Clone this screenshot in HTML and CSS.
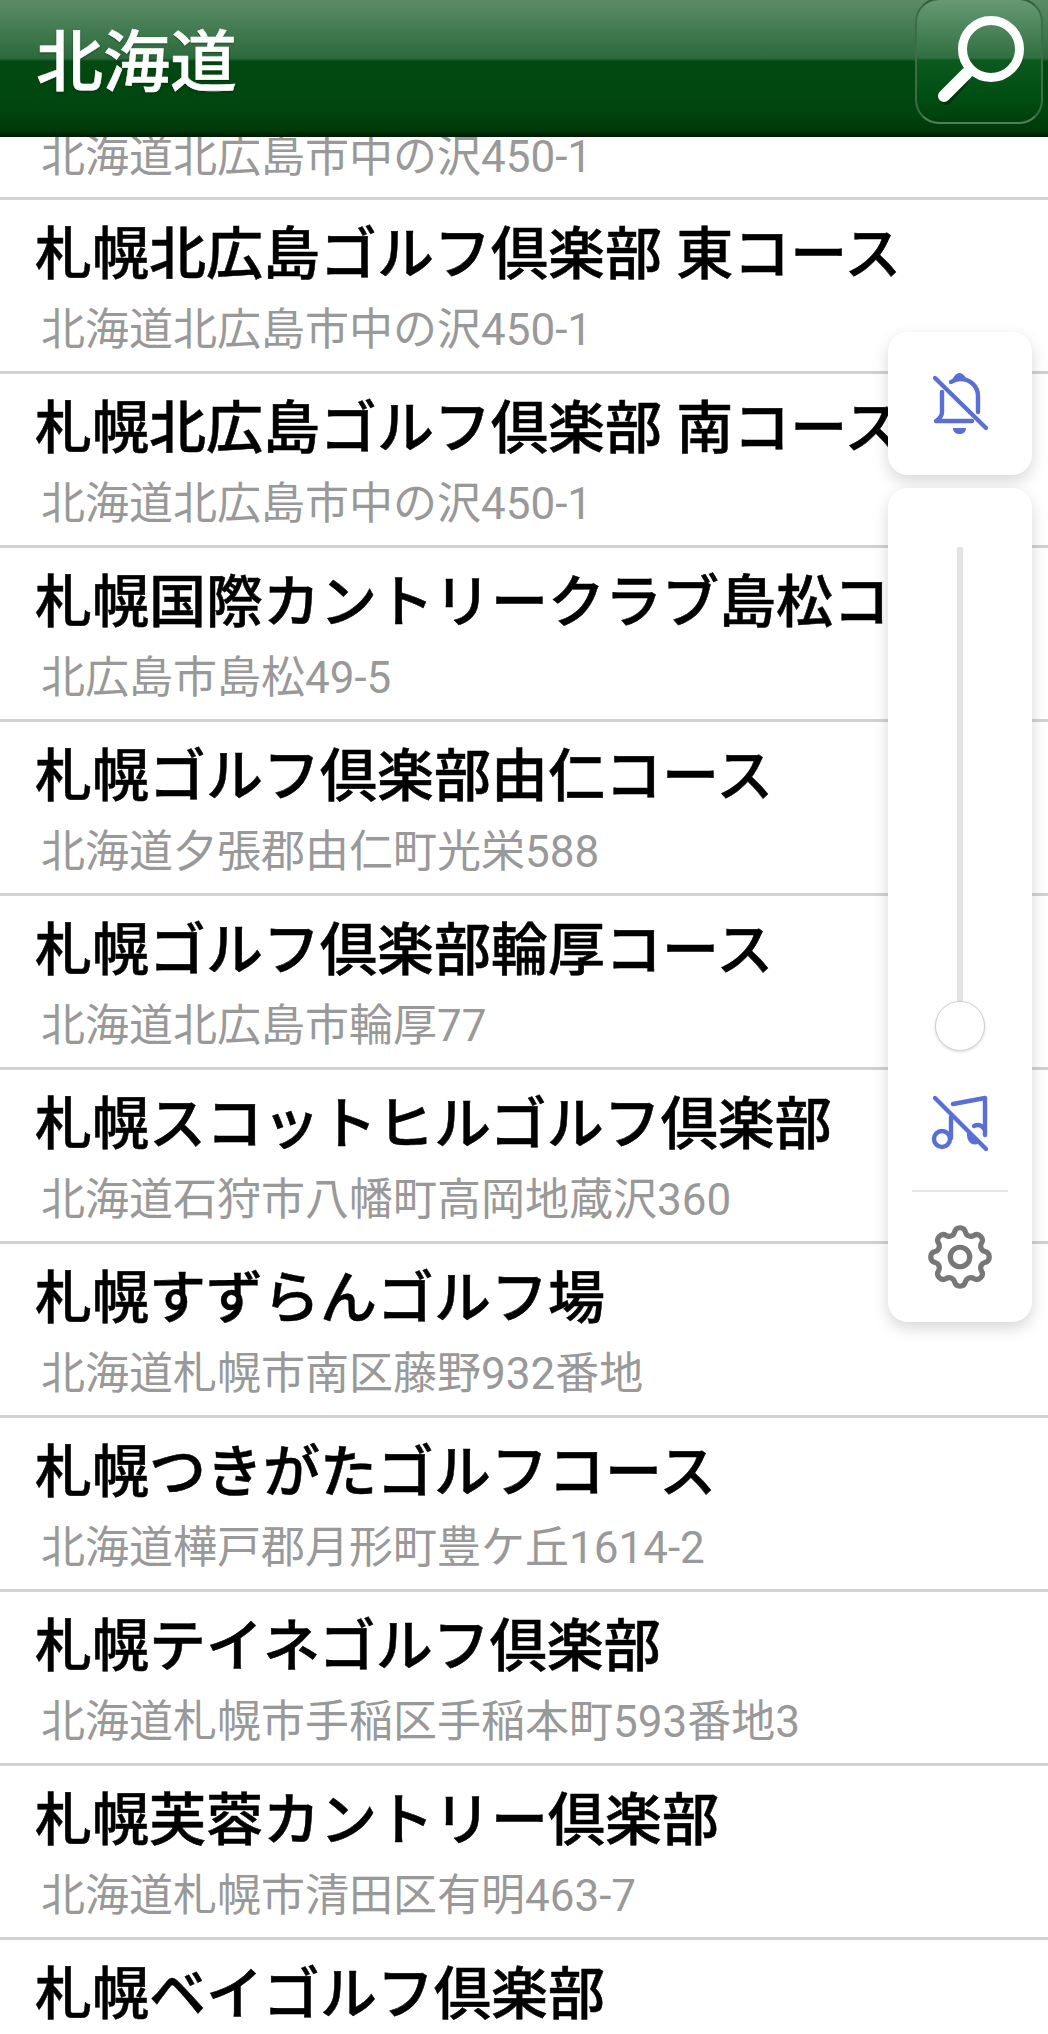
FILE: index.html
```html
<!DOCTYPE html>
<html lang="ja">
<head>
<meta charset="utf-8">
<title>北海道</title>
<link rel="stylesheet" href="styles.css">
</head>
<body>
<div class="app">
  <header class="topbar">
    <h1 class="topbar-title">北海道</h1>
    <button class="search-btn" aria-label="検索">
      <svg class="search-icon" viewBox="0 0 128 126" width="128" height="126">
        <line class="search-shadow" x1="48" y1="82" x2="31" y2="101"/>
        <circle class="search-ring" cx="76" cy="51" r="28.5"/>
        <line class="search-handle" x1="52" y1="75" x2="29" y2="98"/>
      </svg>
    </button>
  </header>
  <main class="list">
    <div class="row row-partial"><div class="row-sub">北海道北広島市中の沢450-1</div></div>
    <div class="row"><div class="row-title">札幌北広島ゴルフ倶楽部 東コース</div><div class="row-sub">北海道北広島市中の沢450-1</div></div>
    <div class="row"><div class="row-title">札幌北広島ゴルフ倶楽部 南コース</div><div class="row-sub">北海道北広島市中の沢450-1</div></div>
    <div class="row"><div class="row-title">札幌国際カントリークラブ島松コース</div><div class="row-sub">北広島市島松49-5</div></div>
    <div class="row"><div class="row-title">札幌ゴルフ倶楽部由仁コース</div><div class="row-sub">北海道夕張郡由仁町光栄588</div></div>
    <div class="row"><div class="row-title">札幌ゴルフ倶楽部輪厚コース</div><div class="row-sub">北海道北広島市輪厚77</div></div>
    <div class="row"><div class="row-title">札幌スコットヒルゴルフ倶楽部</div><div class="row-sub">北海道石狩市八幡町高岡地蔵沢360</div></div>
    <div class="row"><div class="row-title">札幌すずらんゴルフ場</div><div class="row-sub">北海道札幌市南区藤野932番地</div></div>
    <div class="row"><div class="row-title">札幌つきがたゴルフコース</div><div class="row-sub">北海道樺戸郡月形町豊ケ丘1614-2</div></div>
    <div class="row"><div class="row-title">札幌テイネゴルフ倶楽部</div><div class="row-sub">北海道札幌市手稲区手稲本町593番地3</div></div>
    <div class="row"><div class="row-title">札幌芙蓉カントリー倶楽部</div><div class="row-sub">北海道札幌市清田区有明463-7</div></div>
    <div class="row"><div class="row-title">札幌ベイゴルフ倶楽部</div></div>
  </main>
  <aside class="float-panels">
    <div class="card card-bell">
      <svg viewBox="50 50 60 67" width="60" height="67" class="icon-blue">
        <path class="fill" d="M72 61C73 57 76 53 79.5 53C83 53 86 57 87 61Z"/>
        <path d="M71 62C74 60 77 59 80 59C91 59 98 67 98 76V92"/>
        <path d="M62 72V92C62 96 59 99 56 101H92"/>
        <path class="fill" d="M73 108H86C86 112 83 114 79.5 114C76 114 73 112 73 108Z"/>
        <path d="M55 58L106 108"/>
      </svg>
    </div>
    <div class="card card-controls">
      <div class="slider"><div class="slider-track"></div><div class="slider-thumb"></div></div>
      <svg viewBox="50 130 60 66" width="60" height="66" class="icon-blue icon-music">
        <circle cx="62" cy="179" r="8"/>
        <path d="M71 178V157"/>
        <path d="M73 144L105 138V175"/>
        <path d="M94 166C98 164 102 165 105 170"/>
        <path class="fill" d="M87 172C92 172 96 178 98 184C92 186 86 182 87 172Z"/>
        <path d="M55 138L106 189"/>
      </svg>
      <div class="divider"></div>
      <svg viewBox="0 0 24 24" width="78" height="78" class="icon-gear">
        <path d="M10.325 4.317c.426-1.756 2.924-1.756 3.35 0a1.724 1.724 0 0 0 2.573 1.066c1.543-.94 3.31.826 2.37 2.37a1.724 1.724 0 0 0 1.065 2.572c1.756.426 1.756 2.924 0 3.35a1.724 1.724 0 0 0-1.066 2.573c.94 1.543-.826 3.31-2.37 2.37a1.724 1.724 0 0 0-2.572 1.065c-.426 1.756-2.924 1.756-3.35 0a1.724 1.724 0 0 0-2.573-1.066c-1.543.94-3.31-.826-2.37-2.37a1.724 1.724 0 0 0-1.065-2.572c-1.756-.426-1.756-2.924 0-3.35a1.724 1.724 0 0 0 1.066-2.573c-.94-1.543.826-3.31 2.37-2.37c1 .608 2.296.07 2.572-1.065z"/>
        <circle cx="12" cy="12" r="3"/>
      </svg>
    </div>
  </aside>
</div>
</body>
</html>
```

FILE: styles.css
```css
* { box-sizing: border-box; }
html, body { margin: 0; padding: 0; background: #fff; }
body { font-family: Roboto, "Noto Sans CJK JP", "Noto Sans", sans-serif; }

.app {
  position: relative;
  width: 1048px;
  height: 2034px;
  overflow: hidden;
  display: flex;
  flex-direction: column;
}

.topbar {
  position: relative;
  z-index: 2;
  flex: 0 0 137px;
  display: flex;
  align-items: flex-start;
  justify-content: space-between;
  padding: 0 5px 0 36px;
  background: linear-gradient(to bottom, #5b8c66 0, #2c6a3c 58px, #1c5a2b 60px, #014a10 61px, #004510 110px, #003a0a 130px, #001a04 137px);
}
.topbar-title {
  margin: 18px 0 0;
  font-size: 67px;
  line-height: 90px;
  font-weight: 500;
  color: #fff;
  -webkit-text-stroke: .5px #fff;
  text-shadow: 0 1px 2px rgba(0, 30, 0, .6);
}
.search-btn {
  flex: 0 0 128px;
  height: 126px;
  margin-top: -2px;
  padding: 0;
  border: 2px solid;
  border-color: #2f5f3c #3c6c48 #527f5c;
  border-radius: 24px;
  overflow: hidden;
  display: flex;
  align-items: center;
  justify-content: center;
  background: linear-gradient(to bottom, #679a72 0, #2f6f40 58px, #0d5a20 60px, #004d12 100px, #003c0a 126px);
}
.search-icon { flex: none; fill: none; }
.search-ring { stroke: #fff; stroke-width: 9; }
.search-handle { stroke: #fff; stroke-width: 12; stroke-linecap: round; }
.search-shadow { stroke: rgba(0, 0, 0, .3); stroke-width: 12; stroke-linecap: round; }

.list { flex: 1; min-height: 0; overflow: hidden; }
.row {
  height: 174px;
  padding: 10px 0 0 35px;
  border-bottom: 3px solid #d2d2d2;
  background: #fff;
  white-space: nowrap;
}
.row-partial {
  display: flow-root;
  height: 63px;
  padding-top: 0;
}
.row-partial .row-sub { margin-top: -11px; }
.row-title {
  font-size: 57px;
  line-height: 89px;
  font-weight: 500;
  color: #000;
  -webkit-text-stroke: .5px #000;
}
.row-sub {
  margin-left: 6px;
  font-size: 44px;
  line-height: 62px;
  color: #999;
}

.float-panels {
  position: absolute;
  z-index: 3;
  left: 888px;
  top: 332px;
  width: 144px;
  display: flex;
  flex-direction: column;
  gap: 13px;
}
.card {
  background: #fff;
  border-radius: 20px;
  box-shadow: 0 6px 16px rgba(0, 0, 0, .16);
  display: flex;
  flex-direction: column;
  align-items: center;
}
.card-bell { height: 143px; justify-content: center; }
.card-controls { height: 834px; padding-top: 59px; }
.slider {
  position: relative;
  width: 48px;
  height: 504px;
  display: flex;
  flex-direction: column;
  align-items: center;
}
.slider-track { width: 6px; flex: 1; background: #e4e4e4; }
.slider-thumb {
  flex: none;
  width: 50px;
  height: 50px;
  border-radius: 50%;
  background: #fff;
  border: 1px solid #cfcfcf;
  box-shadow: 0 1px 3px rgba(0, 0, 0, .15);
}
.icon-blue { flex: none; fill: none; stroke: #5a6fd6; stroke-width: 4.4; stroke-linecap: round; stroke-linejoin: round; }
.icon-blue .fill { fill: #5a6fd6; stroke: none; }
.icon-music { margin-top: 39px; }
.divider { flex: none; width: 96px; height: 2px; margin-top: 34px; background: #e6e6e6; }
.icon-gear { flex: none; margin-top: 26px; fill: none; stroke: #777; stroke-width: 1.6; stroke-linecap: round; stroke-linejoin: round; }
```
